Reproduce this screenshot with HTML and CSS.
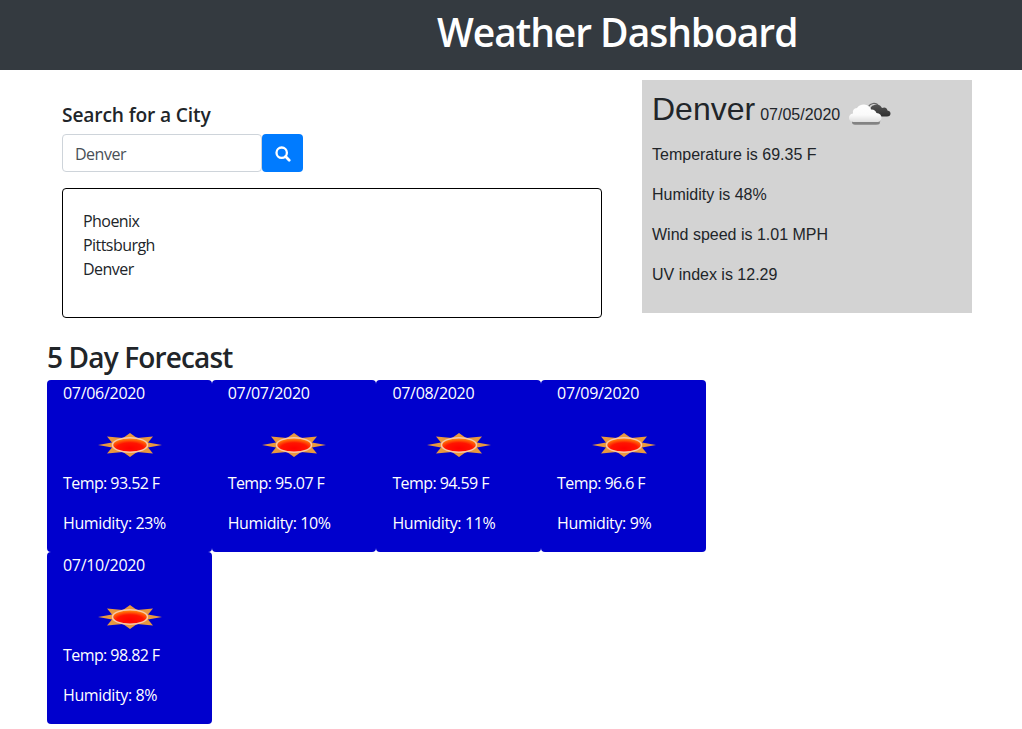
FILE: index.html
```html
<!DOCTYPE html>
<html lang="en">
<head>
<meta charset="utf-8">
<title>Weather Dashboard</title>
<link rel="stylesheet" href="styles.css">
</head>
<body>
<svg class="defs" width="0" height="0" aria-hidden="true">
  <defs>
    <radialGradient id="disc" cx=".5" cy=".72" r=".75">
      <stop offset="0" stop-color="#ff0000"/><stop offset=".5" stop-color="#ff1400"/><stop offset=".8" stop-color="#ff7008"/><stop offset="1" stop-color="#ffa020"/>
    </radialGradient>
    <linearGradient id="white" x1="0" y1="0" x2="0" y2="1">
      <stop offset="0" stop-color="#fff"/><stop offset=".6" stop-color="#fafafa"/><stop offset="1" stop-color="#dedede"/>
    </linearGradient>
    <linearGradient id="dark" x1="0" y1="0" x2="0" y2="1">
      <stop offset="0" stop-color="#555"/><stop offset="1" stop-color="#303030"/>
    </linearGradient>
    <symbol id="sun" viewBox="0 0 64 24">
      <path fill="#e8983e" d="M0 12 14 9.500 9 3.500 25 5 32 0 39 5 55 3.500 50 9.500 64 12 50 14.500 55 20.500 39 19 32 24 25 19 9 20.500 14 14.500Z"/>
      <ellipse cx="32" cy="12" rx="17.500" ry="7.200" fill="url(#disc)" stroke="#f8c8a8" stroke-width="1.500"/>
    </symbol>
  </defs>
</svg>
<header class="navbar"><h1 class="title">Weather Dashboard</h1></header>
<main>
  <div class="top">
    <section class="search">
      <h2 class="search-title">Search for a City</h2>
      <form class="search-form">
        <div class="input">Denver</div>
        <button class="btn" type="button" aria-label="Search">
          <svg width="16" height="16" viewBox="0 0 16 16"><circle cx="6.700" cy="6.700" r="5.200" fill="none" stroke="#fff" stroke-width="2.300"/><path d="m10.600 10.600 3.600 3.600" stroke="#fff" stroke-width="2.800" stroke-linecap="round"/></svg>
        </button>
      </form>
      <div class="history">
        <div>Phoenix</div>
        <div>Pittsburgh</div>
        <div>Denver</div>
      </div>
    </section>
    <section class="current">
      <div class="current-head">
        <span class="city">Denver</span><span class="date">07/05/2020</span>
        <svg class="cloud" width="42" height="24" viewBox="0 0 42 24">
          <path d="M18 11Q18 2.500 24 1.500 28 1 30 4.500" fill="none" stroke="#666" stroke-width="1.200"/>
          <path d="M22 11Q20 3.500 25.500 3Q31 1.500 33 6Q37.500 4.500 38.500 8.500Q41.500 9 41.500 11.500Q41.500 14.500 38 14.500H29Q24 14.500 22 11Z" fill="url(#dark)"/>
          <path d="M4 18H31.500L30.500 22Q29.500 22.800 27 22.800H6Q3 22.800 3 20Z" fill="#828282"/>
          <path d="M4.500 20Q0 19.500 0 16Q0 12 4 11.500Q3 6.500 8 6Q10 2.500 15 2.500Q20.500 3 22 7.500Q26 7 27.500 11Q32.500 11.500 32.500 16Q32 20 28.500 20Z" fill="url(#white)"/>
        </svg>
      </div>
      <p>Temperature is 69.35 F</p>
      <p>Humidity is 48%</p>
      <p>Wind speed is 1.01 MPH</p>
      <p>UV index is 12.29</p>
    </section>
  </div>
  <h2 class="forecast-title">5 Day Forecast</h2>
  <section class="forecast">
    <article class="day"><p>07/06/2020</p><svg class="sun" viewBox="0 0 64 24"><use href="#sun"/></svg><p class="temp">Temp: 93.52 F</p><p class="hum">Humidity: 23%</p></article>
    <article class="day"><p>07/07/2020</p><svg class="sun" viewBox="0 0 64 24"><use href="#sun"/></svg><p class="temp">Temp: 95.07 F</p><p class="hum">Humidity: 10%</p></article>
    <article class="day"><p>07/08/2020</p><svg class="sun" viewBox="0 0 64 24"><use href="#sun"/></svg><p class="temp">Temp: 94.59 F</p><p class="hum">Humidity: 11%</p></article>
    <article class="day"><p>07/09/2020</p><svg class="sun" viewBox="0 0 64 24"><use href="#sun"/></svg><p class="temp">Temp: 96.6 F</p><p class="hum">Humidity: 9%</p></article>
    <article class="day"><p>07/10/2020</p><svg class="sun" viewBox="0 0 64 24"><use href="#sun"/></svg><p class="temp">Temp: 98.82 F</p><p class="hum">Humidity: 8%</p></article>
  </section>
</main>
</body>
</html>
```
FILE: styles.css
```css
* { box-sizing: border-box; }
html, body { height: 100%; }
body {
  margin: 0;
  overflow: hidden;
  background: #fff;
  color: #212529;
  font: 16px/24px "Open Sans", "Noto Sans", sans-serif;
}
h1, h2, p { margin: 0; }
.defs { display: block; height: 0; }
.navbar {
  height: 70px;
  padding: 8px 0 0 437px;
  background: #343a40;
  color: #fff;
}
.title {
  font-size: 39px;
  line-height: 48px;
  font-weight: 600;
  letter-spacing: -1.06px;
  white-space: nowrap;
}
.top { display: flex; align-items: flex-start; padding: 10px 50px 0 62px; }
.search { width: 540px; margin-right: 40px; padding-top: 23px; }
.search-title { font-size: 19.2px; line-height: 23px; font-weight: 600; letter-spacing: -0.15px; }
.search-form { display: flex; margin-top: 8px; }
.input {
  width: 200px;
  height: 38px;
  padding: 7px 12px;
  border: 1px solid #ced4da;
  border-radius: 4px;
  color: #495057;
  letter-spacing: -0.5px;
}
.btn {
  width: 41px;
  height: 38px;
  padding: 4px 0 0;
  border: 0;
  border-radius: 4px;
  background: #007bff;
}
.history {
  height: 130px;
  margin-top: 16px;
  padding: 20px;
  border: 1px solid #000;
  border-radius: 4px;
  letter-spacing: -0.55px;
}
.current {
  width: 330px;
  height: 233px;
  padding: 10px;
  background: #d3d3d3;
  font-family: "Liberation Sans", Arial, sans-serif;
}
.current-head { display: flex; align-items: baseline; height: 53px; line-height: 38px; }
.city { font-size: 32px; }
.date { margin-left: 5px; }
.cloud { align-self: flex-start; margin: 12px 0 0 9px; }
.current p { height: 40px; line-height: 24px; }
.forecast-title {
  margin: 22px 0 0 47px;
  font-size: 28px;
  line-height: 34px;
  font-weight: 600;
  letter-spacing: -0.85px;
}
.forecast {
  display: grid;
  grid-template-columns: repeat(4, 164.700px);
  grid-auto-rows: 172px;
  margin: 6px 0 0 47px;
}
.day {
  display: flex;
  flex-direction: column;
  padding: 1px 16px 0;
  border-radius: 4px;
  background: #0000cd;
  color: #fff;
  letter-spacing: -0.3px;
}
.sun { width: 64px; height: 24px; margin: 28px 0 14px 34.5px; }
.temp { margin-bottom: 16px; letter-spacing: -0.57px; }
.hum { letter-spacing: -0.38px; }
```
